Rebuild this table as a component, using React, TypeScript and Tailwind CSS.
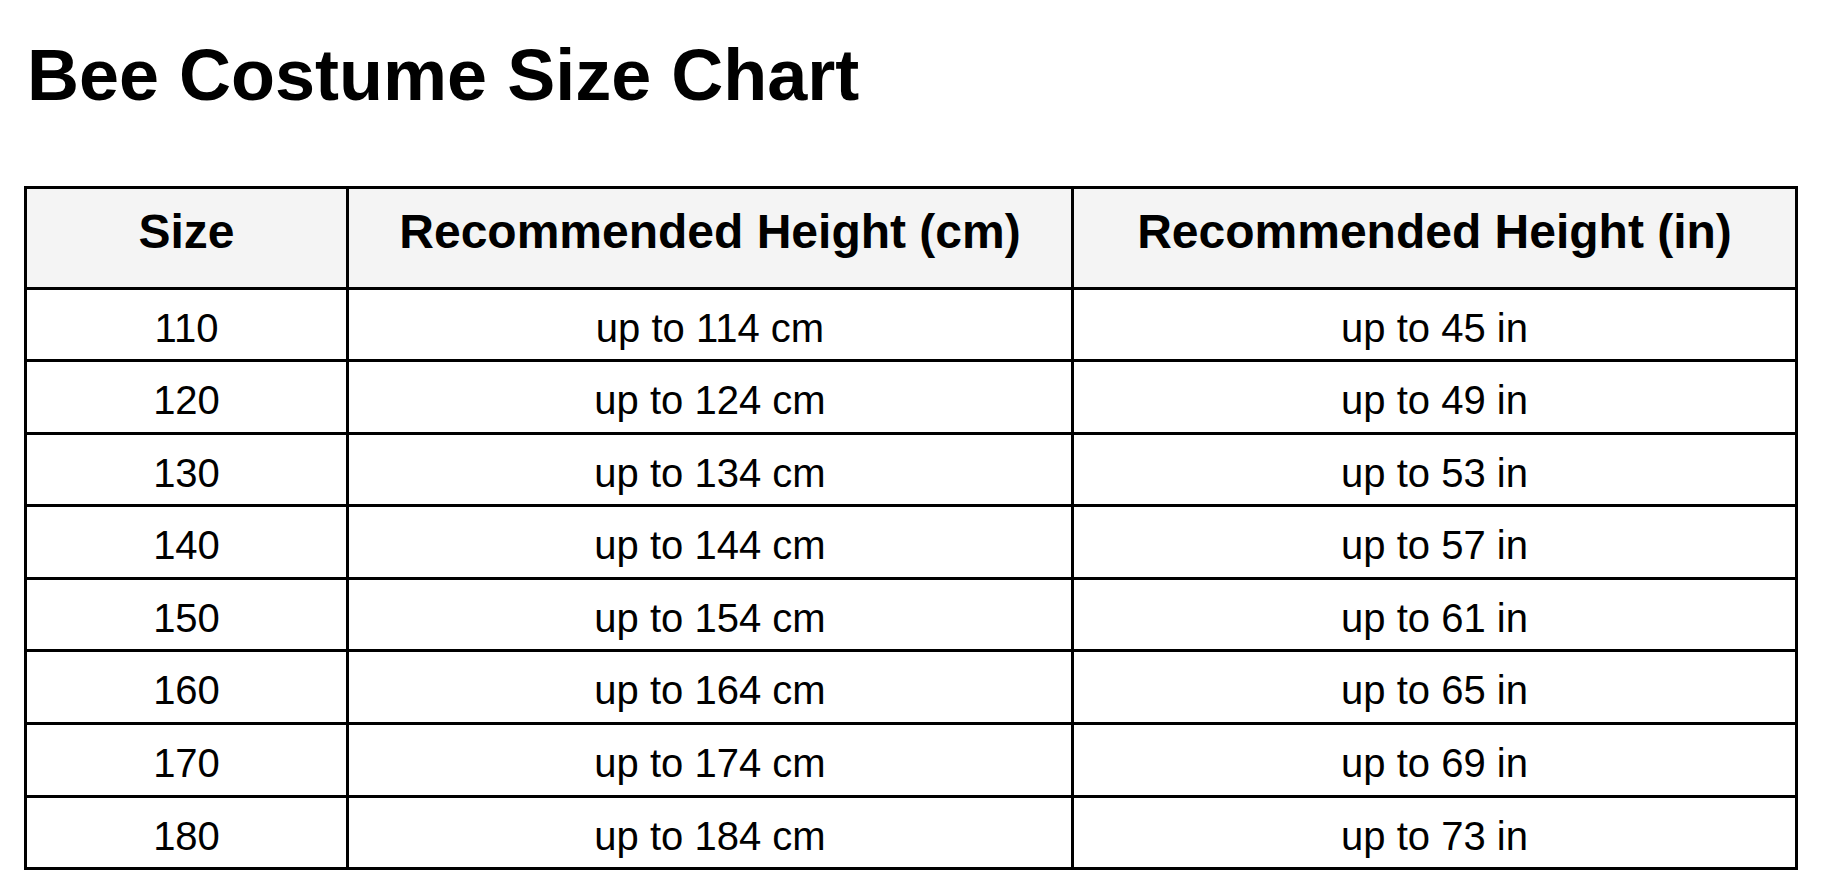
import React from "react";

const rows: [number, number, number][] = [
  [110, 114, 45],
  [120, 124, 49],
  [130, 134, 53],
  [140, 144, 57],
  [150, 154, 61],
  [160, 164, 65],
  [170, 174, 69],
  [180, 184, 73],
];

export default function App() {
  return (
    <div className="min-h-screen w-full bg-white text-black pt-[39px] pl-[24px] font-['Liberation_Sans',Arial,Helvetica,sans-serif]">
      <h1 className="ml-[3px] text-[72px] leading-[72px] font-bold">Bee Costume Size Chart</h1>
      <div className="mt-[75px] grid w-[1774px] grid-cols-[322px_725px_724px] border-l-[3px] border-t-[3px] border-black">
        {["Size", "Recommended Height (cm)", "Recommended Height (in)"].map((h) => (
          <div
            key={h}
            className="h-[100.5px] pt-[19px] bg-[#f4f4f4] border-r-[3px] border-b-[3px] border-black text-center text-[48px] leading-[48px] font-bold whitespace-nowrap"
          >
            {h}
          </div>
        ))}
        {rows.map(([s, cm, inch]) => (
          <React.Fragment key={s}>
            <div className="h-[72.6px] pt-[18px] border-r-[3px] border-b-[3px] border-black text-center text-[40px] leading-[40px] whitespace-nowrap">
              {s}
            </div>
            <div className="h-[72.6px] pt-[18px] border-r-[3px] border-b-[3px] border-black text-center text-[40px] leading-[40px] whitespace-nowrap">
              up to {cm} cm
            </div>
            <div className="h-[72.6px] pt-[18px] border-r-[3px] border-b-[3px] border-black text-center text-[40px] leading-[40px] whitespace-nowrap">
              up to {inch} in
            </div>
          </React.Fragment>
        ))}
      </div>
    </div>
  );
}
